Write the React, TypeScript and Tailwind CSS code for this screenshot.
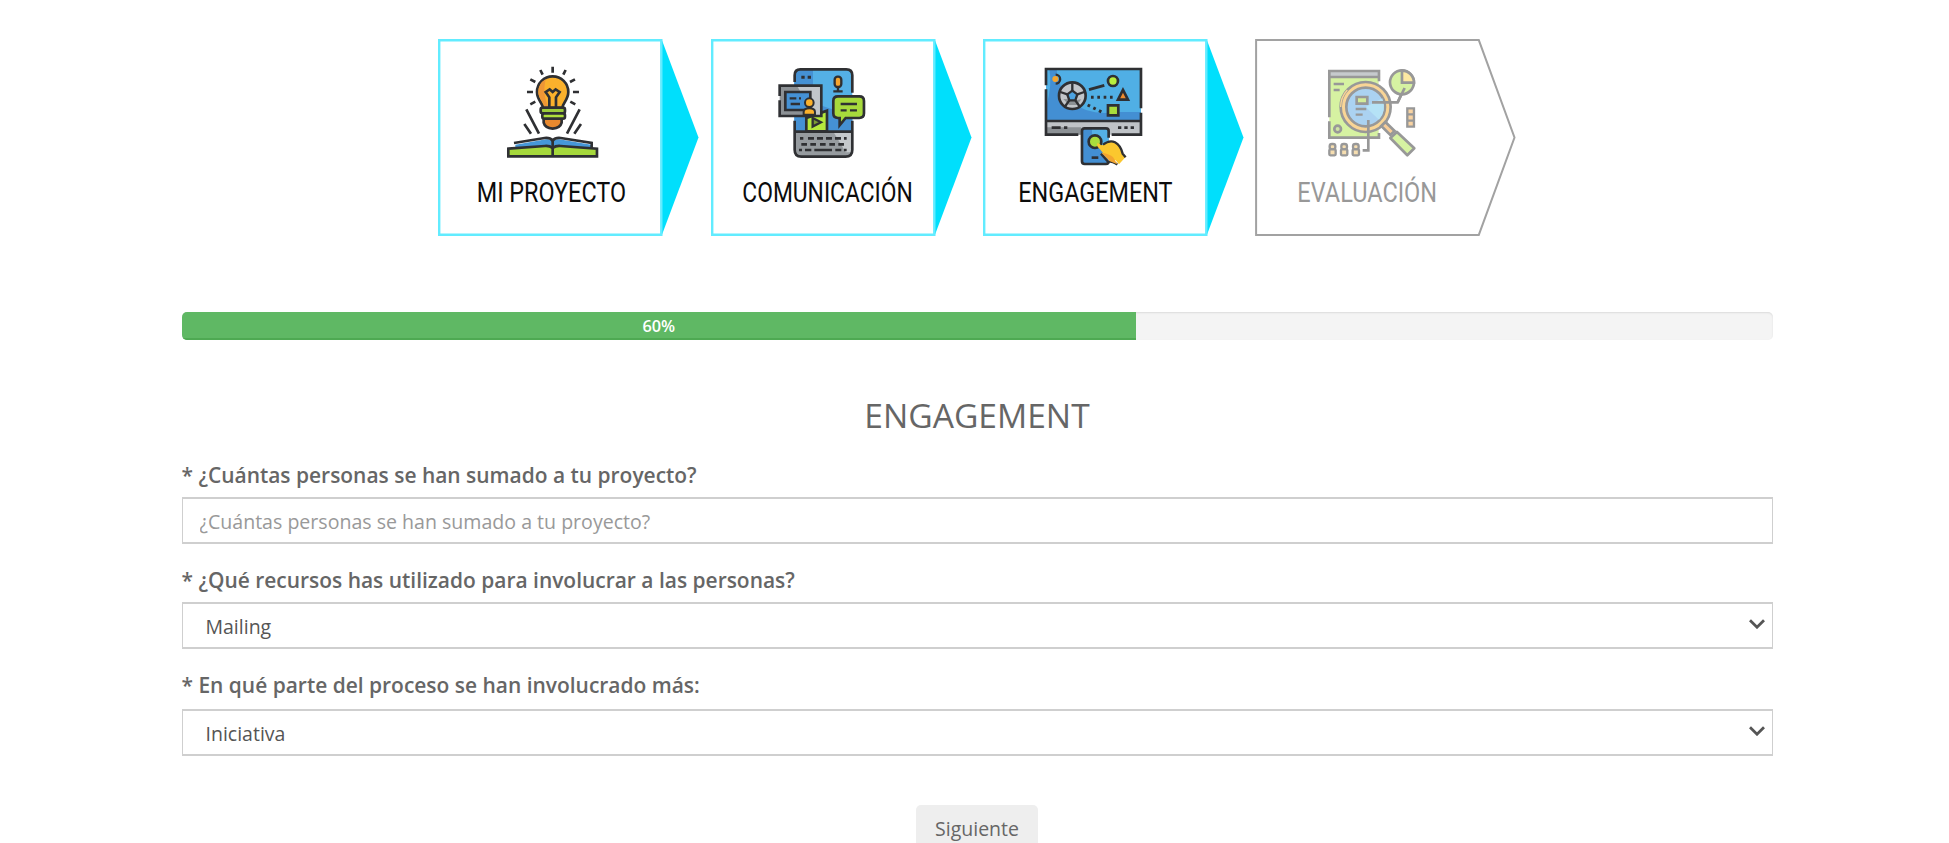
import type { ReactNode } from "react";
import clsx from "clsx";

const INK = "#2f3033";

function IdeaIcon() {
  return (
    <svg viewBox="25 25 673 400" className="block h-[133.3px] w-[224.3px]" fill="none" stroke={INK} strokeWidth="8">
      <path d="M369 108v18M332 118l7 14M408 118l-7 14M302 146l15 8M436 146l-15 8M292 184h18M430 184h18M302 221l15-8M437 221l-15-8" />
      <path d="M290 236l38 73M284 280l20 29M450 236l-38 73M454 280l-20 29" />
      <path d="M340 232c0-14-18-24-18-48a47 47 0 0 1 94 0c0 24-18 34-18 48z" fill="#fbb12c" />
      <path d="M326 184a43 43 0 0 1 22-38c-8 34-2 60 8 82h-12c0-14-18-22-18-44z" fill="#ee9636" stroke="none" />
      <path d="M359 230v-30l-11-16 12-8 9 8 9-8 12 8-11 16v30" strokeWidth="8" />
      <path d="M342 264v12q4 16 27 18q23-2 27-18v-12z" fill="#e8892f" />
      <rect x="333" y="231" width="73" height="17" rx="6" fill="#9ccc3c" />
      <rect x="338" y="248" width="68" height="16" rx="6" fill="#b0e03c" />
      <path d="M257 342l92-16q14-1 20 8v14l-112 6zM485 342l-96-16q-14-1-20 8v14l116 6z" fill="#4698d8" stroke="none" />
      <path d="M253 337l92-15q16-2 24 8q8-10 24-8l93 15v17" />
      <path d="M236 354l110-8q14-1 23 6q9-7 23-6l110 8v23H236z" fill="#a6d93c" />
      <path d="M369 328v48" />
    </svg>
  );
}

function CommunicationIcon() {
  return (
    <svg viewBox="32 25 673 400" className="block h-[133.3px] w-[224.3px]" fill="none" stroke={INK} strokeWidth="8">
      <path d="M282 305V134q0-18 18-18h138q18 0 18 18v171z" fill="#54b0e6" stroke="none" />
      <path d="M282 305V134q0-18 18-18h38v100l118 40v49z" fill="#4591d4" stroke="none" />
      <path d="M282 305h174v52q0 21-20 21H302q-20 0-20-21z" fill="#969b9f" stroke="none" />
      <path d="M400 305h56v60h-20z" fill="#c4c8cb" stroke="none" />
      <path d="M283 154v-20q0-18 17-18h138q18 0 18 18v52M283 270v87q0 21 20 21h133q20 0 20-21v-87M283 303h173" />
      <path d="M303 140h10M322 140h10" strokeWidth="9" />
      <rect x="403" y="138" width="20" height="31" rx="9" fill="#f5a52e" strokeWidth="7" />
      <path d="M413 170v12M399 182h28" strokeWidth="7" />
      <path d="M318 302v-40l62-22v62z" fill="#b5e83d" />
      <path d="M337 262l25 13-25 13z" fill="#7d9c33" strokeWidth="7" />
      <path d="M238 165h125v91H238z" fill="#8c9195" stroke="none" />
      <path d="M290 165h73v91h-20z" fill="#c2c6ca" stroke="none" />
      <path d="M238 196v-31h125v91H238v-47" />
      <path d="M255 184h75v54h-75z" fill="#4591d4" />
      <path d="M268 203h20M296 203h6M271 220h28" strokeWidth="7" />
      <path d="M310 252v-8q0-11 17-11t17 11v8z" fill="#fbb12c" strokeWidth="6" />
      <circle cx="327" cy="216" r="13" fill="#fbb12c" strokeWidth="6" />
      <path d="M413 197h64q14 0 14 14v37q0 14-14 14h-41l-18 22v-22h-5q-14 0-14-14v-37q0-14 14-14z" fill="#a7da3c" />
      <path d="M421 220h49M421 239h18M449 239h21" strokeWidth="7" />
      <g strokeWidth="8">
        <path d="M299 323h10M323 323h18M350 323h18M377 323h18M404 323h18M431 323h8" />
        <path d="M303 341h17M330 341h17M359 341h17M387 341h17M414 341h17" />
        <path d="M296 358h9M314 358h19M342 358h53M405 358h18M431 358h8" />
      </g>
    </svg>
  );
}

function EngagementIcon() {
  return (
    <svg viewBox="38 25 673 400" className="block h-[133.3px] w-[224.3px]" fill="none" stroke={INK} strokeWidth="8">
      <path d="M227 116h285v155H227z" fill="#50afe5" stroke="none" />
      <path d="M227 271v-40q20-70 10-115h22q4 60 50 100t130 28h73v27z" fill="#438fd3" stroke="none" />
      <path d="M227 271h285v41H227z" fill="#bfc3c7" stroke="none" />
      <path d="M227 290h105v22H227z" fill="#8c9195" stroke="none" />
      <path d="M227 164v-49h285v118M227 176v136h97M424 312h88v-66M227 271h285" />
      <path d="M244 291h27M281 291h10M443 291h10M462 291h10M481 291h10" strokeWidth="8" />
      <circle cx="255" cy="145" r="9" fill="#f5a52e" stroke="none" />
      <path d="M256 132a13 13 0 0 1 0 27" strokeWidth="7" />
      <circle cx="306" cy="195" r="40" fill="#c2c6ca" />
      <path d="M279 205l17 18h24l13-17-14 2-13-2z" fill="#8c9195" stroke="none" />
      <path d="M306 180l15 11-6 18h-18l-6-18z" fill="#4da4e2" strokeWidth="7" />
      <path d="M306 180v-22M321 191l21-7M315 209l14 20M297 209l-14 20M291 191l-21-7" strokeWidth="7" />
      <path d="M356 177l46-13" strokeWidth="9" />
      <path d="M362 200h70M352 223l46 23" strokeWidth="9" strokeDasharray="8 11" />
      <circle cx="428" cy="151" r="15" fill="#b8ee3e" />
      <path d="M458 178l15 29h-30z" fill="#f08c2e" />
      <path d="M413 224h31v30h-31z" fill="#a9dc3c" />
      <rect x="335" y="293" width="80" height="107" rx="9" fill="#438fd3" stroke="none" />
      <path d="M365 293h50v50h-50z" fill="#54b0e6" stroke="none" />
      <path d="M415 321v-20q0-8-8-8h-64q-8 0-8 8v91q0 8 8 8h64q8 0 8-8" />
      <path d="M364 381h20" strokeWidth="8" />
      <circle cx="374" cy="333" r="19" fill="#a9dc3c" />
      <path d="M381 338q-3 10 8 18l17 21q8 11 30 12l10 12 20-22-8-12q-8-25-24-32-17-7-33 7l-9 2q-6-8-11-6z" fill="#fbc72e" stroke="none" />
      <path d="M392 369l20 23q17 0 29 10M398 342q20-15 36-7 17 9 23 34l9 11" strokeWidth="7" />
      <path d="M393 366q22 2 35 13l13 22-22-9z" fill="#f3a52e" stroke="none" />
    </svg>
  );
}

function EvaluationIcon() {
  return (
    <svg viewBox="45 25 673 400" className="block h-[133.3px] w-[224.3px]" fill="none" stroke="#989898" strokeWidth="8">
      <path d="M268 121h148v200H268z" fill="#d6f2a2" stroke="none" />
      <path d="M268 121h148v18H268z" fill="#c6cacd" stroke="none" />
      <path d="M268 260V121h149v31M268 139h149M268 272v49h149v-14" />
      <path d="M281 160h31M281 178h18" strokeWidth="7" />
      <circle cx="293" cy="295" r="10" fill="#cfe3a4" />
      <circle cx="377" cy="229" r="75" fill="#f9d596" />
      <path d="M302 229a75 75 0 0 1 20-51" stroke="#f9d596" strokeWidth="4" />
      <circle cx="377" cy="229" r="58" fill="#abd2f1" />
      <path d="M377 229l50-26q14 40-10 64z" fill="#b5e2f6" stroke="none" />
      <path d="M350 199h32v20h-32z" fill="#d3ed9a" />
      <path d="M347 235h32M347 252h21" strokeWidth="7" />
      <path d="M396 215h77l20-43M385 268v91h-17" />
      <circle cx="486" cy="155" r="36" fill="#d6f2a2" />
      <path d="M486 120v36h36a36 36 0 0 0-36-36z" fill="#fce8a2" />
      <path d="M473 215l21-43" />
      <path d="M424 286l12-12 28 27-13 12z" fill="#f8cd98" />
      <path d="M451 322l20-18 52 49-21 21z" fill="#d6f2a2" strokeLinejoin="round" />
      <path d="M502 233h20v55h-20zM502 251h20M502 270h20" fill="#f8d3a2" strokeWidth="7" />
      <g fill="#f6deb0" strokeWidth="7">
        <rect x="269" y="340" width="17" height="16" rx="7" />
        <rect x="268" y="356" width="19" height="18" rx="3" />
        <rect x="304" y="340" width="17" height="16" rx="7" />
        <rect x="303" y="356" width="19" height="18" rx="3" />
        <rect x="339" y="340" width="17" height="16" rx="7" />
        <rect x="338" y="356" width="19" height="18" rx="3" />
      </g>
    </svg>
  );
}

type StepProps = { label: string; labelClass: string; done?: boolean; children: ReactNode };

function Step({ label, labelClass, done = false, children }: StepProps) {
  return (
    <li className="relative h-[197px] w-[261px]">
      <svg viewBox="0 0 261 197" className="absolute inset-0 h-[197px] w-[261px]" fill="none">
        {done ? (
          <>
            <path d="M223.5 0 260.5 98.5 223.5 197z" fill="#00dffc" />
            <path d="M1.2 1.2H223.3V195.8H1.2z" stroke="#62ecff" strokeWidth="2.4" />
          </>
        ) : (
          <path d="M1.1 1.1H223.8L259.5 98.5 223.8 195.9H1.1z" stroke="#a2a2a2" strokeWidth="2" />
        )}
      </svg>
      <div className="relative flex w-[224.3px] flex-col items-center">
        {children}
        <span
          className={clsx(
            "mt-[4.5px] whitespace-nowrap font-['Roboto',sans-serif] text-[28px] leading-[33px]",
            done ? "text-[#0c0c0c]" : "text-[#989898]",
            labelClass,
          )}
        >
          {label}
        </span>
      </div>
    </li>
  );
}

type SelectFieldProps = { label: string; value: string; className: string; boxClass: string };

function SelectField({ label, value, className, boxClass }: SelectFieldProps) {
  return (
    <div className={className}>
      <label className="block whitespace-nowrap text-[20.95px] font-semibold leading-[28px] text-[#666]">{label}</label>
      <div
        className={clsx(
          "flex h-[47px] items-center justify-between border-x border-y-2 border-[#cfcfcf] pl-[23px] pr-[7px] text-[19.5px] text-[#555]",
          boxClass,
        )}
      >
        <span className="pt-[3px]">{value}</span>
        <svg viewBox="0 0 16 10" className="mb-[2px] h-[10px] w-4" fill="none" stroke="#555" strokeWidth="2.8">
          <path d="M1 1.3 8 8.2 15 1.3" />
        </svg>
      </div>
    </div>
  );
}

export default function App() {
  return (
    <main className="h-[843px] overflow-hidden bg-white pt-[38.5px] font-['Open_Sans',sans-serif]">
      <ol className="ml-[438.4px] flex gap-[11.3px]">
        <Step done label="MI PROYECTO" labelClass="scale-x-[0.835] ml-[2px]"><IdeaIcon /></Step>
        <Step done label="COMUNICACIÓN" labelClass="scale-x-[0.815] ml-[9px]"><CommunicationIcon /></Step>
        <Step done label="ENGAGEMENT" labelClass="scale-x-[0.835] ml-[1px]"><EngagementIcon /></Step>
        <Step label="EVALUACIÓN" labelClass="scale-x-[0.84]"><EvaluationIcon /></Step>
      </ol>
      <section className="ml-[181.5px] w-[1591px]">
        <div className="mt-[76.5px] h-[28px] overflow-hidden rounded-[5px] bg-[#f4f4f4] shadow-[inset_0_1px_2px_rgba(0,0,0,0.1)]">
          <div className="h-full w-[60%] bg-[#5fb864] text-center text-[16.3px] font-semibold leading-[28px] text-white shadow-[inset_0_-2px_0_#4ea952]">
            60%
          </div>
        </div>
        <h1 className="mt-[50.5px] text-center text-[33.6px] leading-[48px] text-[#666]">ENGAGEMENT</h1>
        <label className="mt-[22px] block whitespace-nowrap text-[20.95px] font-semibold leading-[28px] text-[#666]">
          * ¿Cuántas personas se han sumado a tu proyecto?
        </label>
        <input
          className="mt-[8px] block h-[47px] w-full border-x border-y-2 border-[#cfcfcf] px-[17px] pt-[2px] text-[19.57px] outline-none placeholder:text-[#999]"
          placeholder="¿Cuántas personas se han sumado a tu proyecto?"
        />
        <SelectField className="mt-[22px]" boxClass="mt-[8px]" label="* ¿Qué recursos has utilizado para involucrar a las personas?" value="Mailing" />
        <SelectField className="mt-[22px]" boxClass="mt-[10px]" label="* En qué parte del proceso se han involucrado más:" value="Iniciativa" />
        <div className="mt-[49px] flex justify-center">
          <button className="h-[49px] w-[122px] rounded-[5px] bg-[#eee] text-[19.5px] text-[#666]">Siguiente</button>
        </div>
      </section>
    </main>
  );
}
